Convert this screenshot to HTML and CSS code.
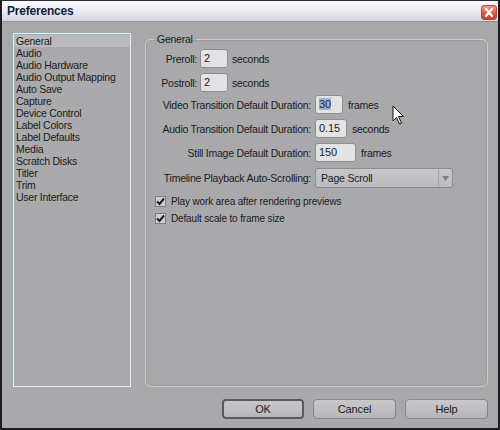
FILE: index.html
```html
<!DOCTYPE html>
<html>
<head>
<meta charset="utf-8">
<title>Preferences</title>
<link rel="stylesheet" href="styles.css">
</head>
<body>
<div class="window">
  <div class="titlebar">
    <span class="title">Preferences</span>
    <span class="close"><svg width="16" height="15" viewBox="0 0 16 15"><path d="M5 4 L11 11 M11 4 L5 11" stroke="#fff" stroke-width="2.2" stroke-linecap="round"/></svg></span>
  </div>
  <div class="body">
    <div class="main">
      <ul class="list">
        <li class="selected">General</li>
        <li>Audio</li>
        <li>Audio Hardware</li>
        <li>Audio Output Mapping</li>
        <li>Auto Save</li>
        <li>Capture</li>
        <li>Device Control</li>
        <li>Label Colors</li>
        <li>Label Defaults</li>
        <li>Media</li>
        <li>Scratch Disks</li>
        <li>Titler</li>
        <li>Trim</li>
        <li>User Interface</li>
      </ul>
      <fieldset class="group">
        <legend>General</legend>
        <div class="rows short">
          <div class="row"><label>Preroll:</label><span class="field w28">2</span><span class="unit">seconds</span></div>
          <div class="row"><label>Postroll:</label><span class="field w28">2</span><span class="unit">seconds</span></div>
        </div>
        <div class="rows long">
          <div class="row"><label>Video Transition Default Duration:</label><span class="field w28"><span class="sel">30</span></span><span class="unit">frames</span></div>
          <div class="row"><label>Audio Transition Default Duration:</label><span class="field w32">0.15</span><span class="unit">seconds</span></div>
          <div class="row"><label>Still Image Default Duration:</label><span class="field w41">150</span><span class="unit">frames</span></div>
          <div class="row sel-row"><label>Timeline Playback Auto-Scrolling:</label>
            <span class="select"><span class="select-text">Page Scroll</span><span class="select-arrow"><svg width="7" height="5" viewBox="0 0 7 5"><path d="M0 0 H7 L3.5 5 Z" fill="#7d7e82"/></svg></span></span>
          </div>
        </div>
        <div class="checks">
          <div class="check"><span class="box"><svg width="9" height="9" viewBox="0 0 9 9"><path d="M1 4.5 L3.5 7 L8 1.5" stroke="#1d1d1f" stroke-width="2" fill="none"/></svg></span>Play work area after rendering previews</div>
          <div class="check"><span class="box"><svg width="9" height="9" viewBox="0 0 9 9"><path d="M1 4.5 L3.5 7 L8 1.5" stroke="#1d1d1f" stroke-width="2" fill="none"/></svg></span>Default scale to frame size</div>
        </div>
      </fieldset>
    </div>
    <div class="buttons">
      <button class="btn default">OK</button>
      <button class="btn">Cancel</button>
      <button class="btn">Help</button>
    </div>
  </div>
  <svg class="cursor" width="14" height="21" viewBox="0 0 14 21"><path d="M1 1 L1 16 L4.5 12.5 L7.5 19 L9.5 18 L6.5 11.5 L11.5 11.5 Z" fill="#fff" stroke="#111" stroke-width="1" stroke-linejoin="round"/></svg>
</div>
</body>
</html>
```

FILE: styles.css
```css
* { box-sizing: border-box; }
html, body { margin: 0; padding: 0; }
body {
  width: 500px;
  height: 430px;
  overflow: hidden;
  font-family: "Liberation Sans", Arial, sans-serif;
  font-size: 10.5px;
  letter-spacing: -0.25px;
  color: #1b1b1d;
  background: #aaaaac;
}
.window {
  position: relative;
  width: 500px;
  height: 430px;
  border: 2px solid #1c1c20;
  border-top: 1px solid #2a2a30;
  background: #a9a9ab;
  display: flex;
  flex-direction: column;
}
.titlebar {
  height: 21px;
  flex: none;
  display: flex;
  align-items: center;
  justify-content: space-between;
  padding: 0 1px 0 5px;
  background: linear-gradient(#fbfbfd, #e8eaf0 55%, #d2d6e0);
  border-bottom: 1px solid #8e9096;
}
.title {
  font-weight: bold;
  font-size: 12px;
  color: #14213a;
  letter-spacing: -0.2px;
}
.close {
  width: 16px;
  height: 15px;
  margin-top: 2px;
  border-radius: 3px;
  border: 1px solid #b84a3e;
  background: linear-gradient(#f3a08c, #e0604a 50%, #c9402e);
  display: flex;
  align-items: center;
  justify-content: center;
}
.close svg { margin: -1px; }
.body {
  flex: 1;
  padding: 11px 10px 0 11px;
  display: flex;
  flex-direction: column;
}
.main {
  height: 354px;
  display: flex;
  gap: 14px;
}
.list {
  margin: 0;
  padding: 1px 0 0 0;
  list-style: none;
  width: 118px;
  border: 1px solid #e2eef2;
  box-shadow: 0 0 0 1px #9ab0b8;
  background: #aaaaac;
  font-size: 10.5px;
  letter-spacing: -0.25px;
}
.list li {
  height: 12px;
  line-height: 12px;
  padding-left: 2px;
  white-space: nowrap;
}
.list li.selected { background: #babbbf; }
.group {
  flex: 1;
  margin: 0;
  padding: 0;
  border: 1px solid #cdcdcf;
  border-radius: 6px;
  box-shadow: inset 0 0 0 1px #9d9d9f;
  min-width: 0;
}
.group legend {
  margin-left: 8px;
  padding: 0 3px;
  line-height: 12px;
}
.rows {
  display: flex;
  flex-direction: column;
  gap: 5px;
}
.row {
  display: flex;
  align-items: center;
}
.row label { text-align: right; white-space: nowrap; flex: none; }
.short { margin-top: 4px; }
.short label { width: 51px; margin-right: 3px; }
.long { margin-top: 3px; }
.long label { width: 165px; margin-right: 4px; }
.unit { margin-left: 5px; }
.short .unit { margin-left: 4px; }
.field {
  height: 19px;
  line-height: 17px;
  border: 1px solid #8e8e92;
  border-radius: 3px;
  background: #e3e3e5;
  padding-left: 3px;
  font-size: 11px;
  letter-spacing: -0.1px;
}
.w28 { width: 28px; }
.w32 { width: 32px; }
.w41 { width: 41px; }
.sel { background: #9fb2cc; color: #1a2540; }
.sel-row { margin-top: 1px; }
.select {
  width: 138px;
  height: 20px;
  border: 1px solid #8c8c90;
  border-radius: 3px;
  background: linear-gradient(#c6c6c8, #bcbcbe);
  display: flex;
  align-items: center;
}
.select-text {
  flex: 1;
  padding-left: 5px;
  font-size: 10.5px;
  letter-spacing: -0.2px;
}
.select-arrow {
  width: 14px;
  height: 18px;
  border-left: 1px solid #a4a4a8;
  display: flex;
  align-items: center;
  justify-content: center;
}
.checks {
  margin-top: 7px;
  padding-left: 9px;
  display: flex;
  flex-direction: column;
  gap: 5px;
  font-size: 10px;
  letter-spacing: -0.15px;
}
.check {
  display: flex;
  align-items: center;
  gap: 5px;
  height: 12px;
}
.box {
  width: 11px;
  height: 11px;
  border: 1px solid #7e7e82;
  background: #cfcfd1;
  display: flex;
  align-items: center;
  justify-content: center;
}
.buttons {
  margin-top: 12px;
  display: flex;
  justify-content: flex-end;
  gap: 9px;
}
.btn {
  width: 83px;
  height: 20px;
  font-family: "Liberation Sans", Arial, sans-serif;
  font-size: 11px;
  letter-spacing: -0.1px;
  color: #1b1b1d;
  border: 1px solid #85858a;
  border-radius: 4px;
  background: linear-gradient(#c8c8ca, #b6b6b8);
  padding: 0;
}
.btn.default {
  width: 82px;
  border: 2px solid #5a5a5e;
}
.cursor {
  position: absolute;
  left: 390px;
  top: 104px;
}
```
